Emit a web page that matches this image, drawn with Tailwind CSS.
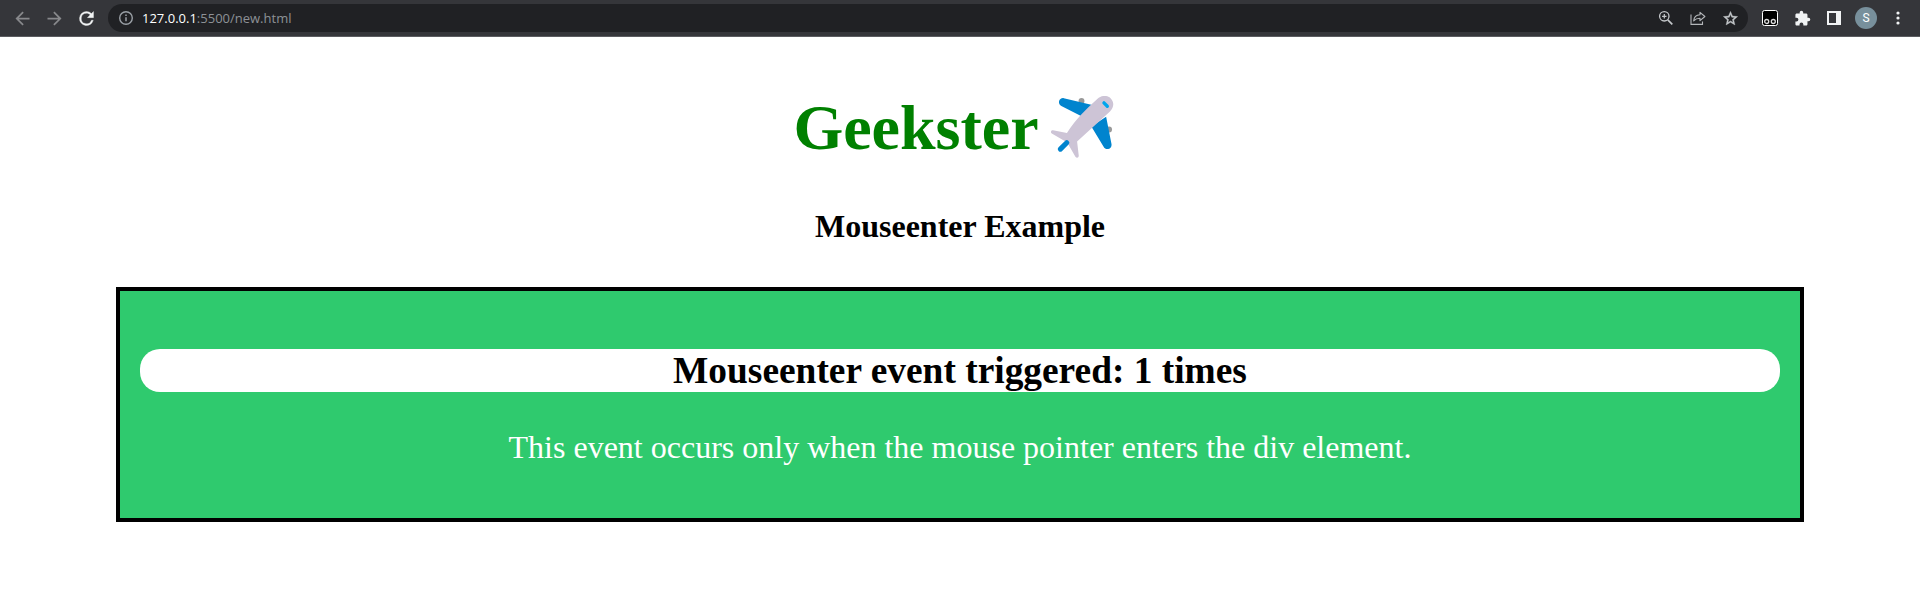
<!DOCTYPE html>
<html lang="en">
<head>
<meta charset="utf-8">
<title>Mouseenter Example</title>
<script src="https://cdn.jsdelivr.net/npm/@tailwindcss/browser@4"></script>
</head>
<body class="h-[608px] overflow-hidden bg-white font-['Liberation_Serif',serif] text-black">
<header class="flex h-[37px] items-center border-b border-[#5b5c60] bg-[#35363a] px-1.5 font-['Open_Sans',sans-serif]">
  <div class="flex w-[102px] shrink-0">
    <span class="flex w-8 justify-center"><svg class="size-[21px]" viewBox="0 0 24 24" fill="#87888b"><path d="M20 11H7.83l5.59-5.59L12 4l-8 8 8 8 1.41-1.41L7.83 13H20v-2z"/></svg></span>
    <span class="flex w-8 justify-center"><svg class="size-[21px]" viewBox="0 0 24 24" fill="#87888b"><path d="M12 4l-1.41 1.41L16.17 11H4v2h12.17l-5.58 5.59L12 20l8-8z"/></svg></span>
    <span class="flex w-8 justify-center"><svg class="size-[21px]" viewBox="0 0 24 24" fill="#f1f3f4" stroke="#f1f3f4" stroke-width=".4"><path d="M17.65 6.35A7.96 7.96 0 0 0 12 4a8 8 0 1 0 7.73 10h-2.08A6 6 0 1 1 12 6c1.66 0 3.14.69 4.22 1.78L13 11h7V4l-2.35 2.35z"/></svg></span>
  </div>
  <div class="flex h-7 w-[1640px] shrink-0 items-center rounded-full bg-[#202124] px-0.5">
    <span class="flex w-8 justify-center"><svg class="size-4" viewBox="0 0 16 16" fill="none" stroke="#9aa0a6" stroke-width="1.4"><circle cx="8" cy="8" r="6.3"/><path d="M8 7.2v4M8 4.4v1.5" stroke-width="1.5"/></svg></span>
    <span class="flex-1 text-[13px] leading-5 text-[#8d9196]"><span class="text-white">127.0.0.1</span>:5500/new.html</span>
    <span class="flex w-8 justify-center"><svg class="size-4" viewBox="0 0 16 16" fill="none" stroke="#c4c7ca" stroke-width="1.3"><circle cx="6.3" cy="6.3" r="4.7"/><path d="M9.8 9.8l4.500 4.500" stroke-width="1.7"/><path d="M6.300 4.100v4.400M4.100 6.300h4.400" stroke-width="1.2"/></svg></span>
    <span class="flex w-8 justify-center"><svg class="size-4" viewBox="0 0 16 16" fill="none" stroke="#b4b7ba" stroke-width="1.1"><path d="M1 4.500v9.900h11.500v-3"/><path d="M3.700 10.800c.3-3.600 2.500-5.800 6.300-6V2.300l4.900 4.200-4.900 4.200V8.300c-3 0-4.800.9-6.300 2.500z" stroke-linejoin="round"/></svg></span>
    <span class="flex w-8 justify-center"><svg class="size-[17px]" viewBox="0 0 24 24" fill="#c4c7ca"><path d="M22 9.240l-7.190-.62L12 2 9.190 8.630 2 9.240l5.460 4.730L5.820 21 12 17.270 18.180 21l-1.630-7.030L22 9.240zM12 15.400l-3.760 2.270 1-4.280-3.320-2.880 4.380-.38L12 6.100l1.710 4.040 4.380.38-3.320 2.880 1 4.280L12 15.400z" stroke="#c4c7ca" stroke-width=".6"/></svg></span>
  </div>
  <div class="ml-1.5 flex items-center">
    <span class="flex w-8 justify-center"><svg class="size-4" viewBox="0 0 16 16"><rect x=".5" y=".5" width="15" height="15" rx="2" fill="#000" stroke="#fff"/><g fill="#000" stroke="#ddd" stroke-width="1.3"><circle cx="4.700" cy="11.500" r="2"/><circle cx="11.300" cy="11.500" r="2"/></g></svg></span>
    <span class="flex w-8 justify-center"><svg class="size-[17px]" viewBox="0 0 24 24" fill="#f1f3f4"><path d="M20.500 11H19V7c0-1.100-.9-2-2-2h-4V3.500a2.500 2.500 0 0 0-5 0V5H4c-1.100 0-1.990.9-1.990 2v3.800H3.500a2.700 2.700 0 0 1 0 5.400H2V20c0 1.100.9 2 2 2h3.800v-1.500a2.700 2.700 0 0 1 5.400 0V22H17c1.100 0 2-.9 2-2v-4h1.500a2.500 2.500 0 0 0 0-5z"/></svg></span>
    <span class="flex w-8 justify-center"><svg class="size-3.5" viewBox="0 0 14 14" fill="#f1f3f4"><path fill-rule="evenodd" d="M0 0h14v14H0zM2 2v10h7V2z"/></svg></span>
    <span class="flex w-8 justify-center"><span class="flex size-[22px] items-center justify-center rounded-full bg-[#78909c] font-['Roboto',sans-serif] text-xs text-white">S</span></span>
    <span class="flex w-8 justify-center"><svg class="h-[14px] w-1" viewBox="0 0 4 14" fill="#f1f3f4"><circle cx="2" cy="2" r="1.600"/><circle cx="2" cy="7" r="1.600"/><circle cx="2" cy="12" r="1.600"/></svg></span>
  </div>
</header>
<main class="flex flex-col items-center">
  <h1 class="mt-[54px] flex h-[74px] items-center text-[64px] leading-[74px] font-bold text-[#008000]">Geekster
    <svg class="mr-[13px] mb-0.5 ml-3 size-[63px]" viewBox="0 0 64 64">
      <g fill="#999"><circle cx="31" cy="5" r="3"/><circle cx="59" cy="34" r="3"/></g>
      <path fill="#0084ce" d="M13 2.200L43 9.500 34 22 10.500 10.200C6 7.500 8.500 1.400 13 2.200zM56 21l5.500 28c.5 5.500-6.200 6.700-8.200 2.200L41 31z"/>
      <path fill="#cdc4d6" d="M47 3c4.500-4 10-4 13.500-.8 4 4 3.500 9.300-.6 13.500L26.500 46.300l1.700 14.500c0 2.200-2.400 2.500-3.400.8L16.500 47.200.800 38c-1.700-1.200-.7-3.400 1.200-3.200L16.200 37.500C25 23.500 36 13 47 3z"/>
      <g fill="none" stroke-linecap="round"><path stroke="#0084ce" stroke-width="5.200" d="M9.500 54l6.500-6.500"/><path stroke="#00a6ed" stroke-width="3.400" d="M53.800 7l3.400 3.400"/></g>
    </svg>
  </h1>
  <h2 class="mt-[43px] text-[32px] leading-[37px] font-bold">Mouseenter Example</h2>
  <section class="mt-[42px] flex h-[235px] w-[1688px] flex-col border-4 border-black bg-[#2fca6e] px-5 pt-[58px] text-center">
    <h3 class="rounded-[20px] bg-white text-[37.400px] leading-[43px] font-bold">Mouseenter event triggered: 1 times</h3>
    <p class="mt-[37px] text-[32px] leading-[37px] text-white">This event occurs only when the mouse pointer enters the div element.</p>
  </section>
</main>
</body>
</html>
